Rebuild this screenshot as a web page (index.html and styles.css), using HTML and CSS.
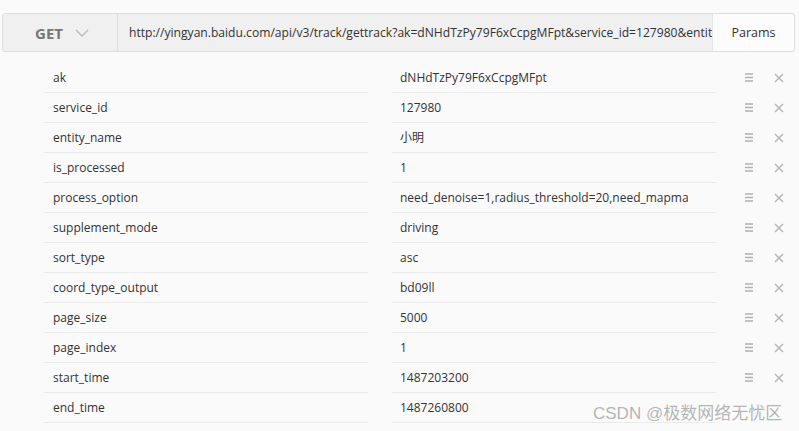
FILE: index.html
```html
<!DOCTYPE html>
<html>
<head>
<meta charset="utf-8">
<link rel="stylesheet" href="styles.css">
</head>
<body>
<div class="page">
  <div class="bar">
    <div class="method">GET
      <svg class="chev" width="14" height="8" viewBox="0 0 14 8"><path d="M1 1 L7 7 L13 1" fill="none" stroke="#bbb" stroke-width="1.4"/></svg>
    </div>
    <div class="url"><span class="url-text">http://yingyan.baidu.com/api/v3/track/gettrack?ak=dNHdTzPy79F6xCcpgMFpt&amp;service_id=127980&amp;entity_name=小明&amp;is_processed=1</span></div>
    <div class="params">Params</div>
  </div>
  <div class="rows">
    <div class="row"><div class="key">ak</div><div class="val"><span class="txt">dNHdTzPy79F6xCcpgMFpt</span></div><span class="drag"><svg width="8" height="9" viewBox="0 0 8 9"><path d="M0 1h8M0 4.5h8M0 8h8" stroke="#b0b0b0" stroke-width="1.5"/></svg></span><span class="del"><svg width="10" height="10" viewBox="0 0 10 10"><path d="M1 1L9 9M9 1L1 9" stroke="#b8b8b8" stroke-width="1.6"/></svg></span></div>
    <div class="row"><div class="key">service_id</div><div class="val"><span class="txt">127980</span></div><span class="drag"><svg width="8" height="9" viewBox="0 0 8 9"><path d="M0 1h8M0 4.5h8M0 8h8" stroke="#b0b0b0" stroke-width="1.5"/></svg></span><span class="del"><svg width="10" height="10" viewBox="0 0 10 10"><path d="M1 1L9 9M9 1L1 9" stroke="#b8b8b8" stroke-width="1.6"/></svg></span></div>
    <div class="row"><div class="key">entity_name</div><div class="val"><span class="txt">小明</span></div><span class="drag"><svg width="8" height="9" viewBox="0 0 8 9"><path d="M0 1h8M0 4.5h8M0 8h8" stroke="#b0b0b0" stroke-width="1.5"/></svg></span><span class="del"><svg width="10" height="10" viewBox="0 0 10 10"><path d="M1 1L9 9M9 1L1 9" stroke="#b8b8b8" stroke-width="1.6"/></svg></span></div>
    <div class="row"><div class="key">is_processed</div><div class="val"><span class="txt">1</span></div><span class="drag"><svg width="8" height="9" viewBox="0 0 8 9"><path d="M0 1h8M0 4.5h8M0 8h8" stroke="#b0b0b0" stroke-width="1.5"/></svg></span><span class="del"><svg width="10" height="10" viewBox="0 0 10 10"><path d="M1 1L9 9M9 1L1 9" stroke="#b8b8b8" stroke-width="1.6"/></svg></span></div>
    <div class="row"><div class="key">process_option</div><div class="val"><span class="txt">need_denoise=1,radius_threshold=20,need_mapmatch=1</span></div><span class="drag"><svg width="8" height="9" viewBox="0 0 8 9"><path d="M0 1h8M0 4.5h8M0 8h8" stroke="#b0b0b0" stroke-width="1.5"/></svg></span><span class="del"><svg width="10" height="10" viewBox="0 0 10 10"><path d="M1 1L9 9M9 1L1 9" stroke="#b8b8b8" stroke-width="1.6"/></svg></span></div>
    <div class="row"><div class="key">supplement_mode</div><div class="val"><span class="txt">driving</span></div><span class="drag"><svg width="8" height="9" viewBox="0 0 8 9"><path d="M0 1h8M0 4.5h8M0 8h8" stroke="#b0b0b0" stroke-width="1.5"/></svg></span><span class="del"><svg width="10" height="10" viewBox="0 0 10 10"><path d="M1 1L9 9M9 1L1 9" stroke="#b8b8b8" stroke-width="1.6"/></svg></span></div>
    <div class="row"><div class="key">sort_type</div><div class="val"><span class="txt">asc</span></div><span class="drag"><svg width="8" height="9" viewBox="0 0 8 9"><path d="M0 1h8M0 4.5h8M0 8h8" stroke="#b0b0b0" stroke-width="1.5"/></svg></span><span class="del"><svg width="10" height="10" viewBox="0 0 10 10"><path d="M1 1L9 9M9 1L1 9" stroke="#b8b8b8" stroke-width="1.6"/></svg></span></div>
    <div class="row"><div class="key">coord_type_output</div><div class="val"><span class="txt">bd09ll</span></div><span class="drag"><svg width="8" height="9" viewBox="0 0 8 9"><path d="M0 1h8M0 4.5h8M0 8h8" stroke="#b0b0b0" stroke-width="1.5"/></svg></span><span class="del"><svg width="10" height="10" viewBox="0 0 10 10"><path d="M1 1L9 9M9 1L1 9" stroke="#b8b8b8" stroke-width="1.6"/></svg></span></div>
    <div class="row"><div class="key">page_size</div><div class="val"><span class="txt">5000</span></div><span class="drag"><svg width="8" height="9" viewBox="0 0 8 9"><path d="M0 1h8M0 4.5h8M0 8h8" stroke="#b0b0b0" stroke-width="1.5"/></svg></span><span class="del"><svg width="10" height="10" viewBox="0 0 10 10"><path d="M1 1L9 9M9 1L1 9" stroke="#b8b8b8" stroke-width="1.6"/></svg></span></div>
    <div class="row"><div class="key">page_index</div><div class="val"><span class="txt">1</span></div><span class="drag"><svg width="8" height="9" viewBox="0 0 8 9"><path d="M0 1h8M0 4.5h8M0 8h8" stroke="#b0b0b0" stroke-width="1.5"/></svg></span><span class="del"><svg width="10" height="10" viewBox="0 0 10 10"><path d="M1 1L9 9M9 1L1 9" stroke="#b8b8b8" stroke-width="1.6"/></svg></span></div>
    <div class="row"><div class="key">start_time</div><div class="val"><span class="txt">1487203200</span></div><span class="drag"><svg width="8" height="9" viewBox="0 0 8 9"><path d="M0 1h8M0 4.5h8M0 8h8" stroke="#b0b0b0" stroke-width="1.5"/></svg></span><span class="del"><svg width="10" height="10" viewBox="0 0 10 10"><path d="M1 1L9 9M9 1L1 9" stroke="#b8b8b8" stroke-width="1.6"/></svg></span></div>
    <div class="row"><div class="key">end_time</div><div class="val"><span class="txt">1487260800</span></div><span class="drag"></span><span class="del"></span></div>
  </div>
  <div class="watermark">CSDN @极数网络无忧区</div>
</div>
</body>
</html>
```
FILE: styles.css
```css
html, body {
  margin: 0;
  padding: 0;
  background: #fafafa;
}
body {
  font-family: "Open Sans", "Noto Sans CJK SC", sans-serif;
  color: #333;
  font-size: 12px;
}
.page {
  position: relative;
  width: 799px;
  height: 431px;
  overflow: hidden;
  padding-top: 13px;
  box-sizing: border-box;
}
.bar {
  display: flex;
  margin-left: 2px;
  width: 793px;
  height: 39px;
  box-sizing: border-box;
  border: 1px solid #dedede;
  border-radius: 3px;
  background: #f0f0f0;
}
.method {
  width: 115px;
  flex: none;
  display: flex;
  align-items: center;
  justify-content: center;
  gap: 12px;
  font-weight: 700;
  font-size: 15px;
  color: #777;
  border-right: 1px solid #dedede;
  padding-left: 4px;
  box-sizing: border-box;
}
.chev { margin-top: 1px; }
.url {
  flex: 1;
  min-width: 0;
  overflow: hidden;
  padding-left: 11px;
  line-height: 37px;
  font-size: 12.1px;
  color: #333;
}
.url-text {
  display: block;
  white-space: nowrap;
  overflow: hidden;
}
.params {
  width: 81px;
  flex: none;
  background: #fcfcfc;
  border-left: 1px solid #e4e4e4;
  text-align: center;
  line-height: 37px;
  font-size: 12.5px;
  color: #333;
  border-radius: 0 3px 3px 0;
}
.rows {
  margin-top: 11px;
}
.row {
  display: flex;
  align-items: stretch;
  height: 30px;
  padding-left: 44px;
}
.key, .val {
  width: 324px;
  flex: none;
  box-sizing: border-box;
  border-bottom: 1px solid #eaeaea;
  padding-left: 9px;
  line-height: 30px;
  white-space: nowrap;
  overflow: hidden;
}
.val {
  margin-left: 24px;
  padding-left: 8px;
}
.txt {
  display: block;
  width: 288px;
  overflow: hidden;
  white-space: nowrap;
}
.drag, .del {
  display: flex;
  align-items: center;
  justify-content: center;
  padding-bottom: 1px;
}
.drag {
  width: 8px;
  margin-left: 29px;
}
.del {
  width: 10px;
  margin-left: 21px;
}
.watermark {
  position: absolute;
  left: 593px;
  top: 399px;
  font-family: "Liberation Sans", "Noto Sans CJK SC", sans-serif;
  font-size: 17px;
  color: rgba(120, 120, 120, 0.55);
  white-space: nowrap;
}
```
